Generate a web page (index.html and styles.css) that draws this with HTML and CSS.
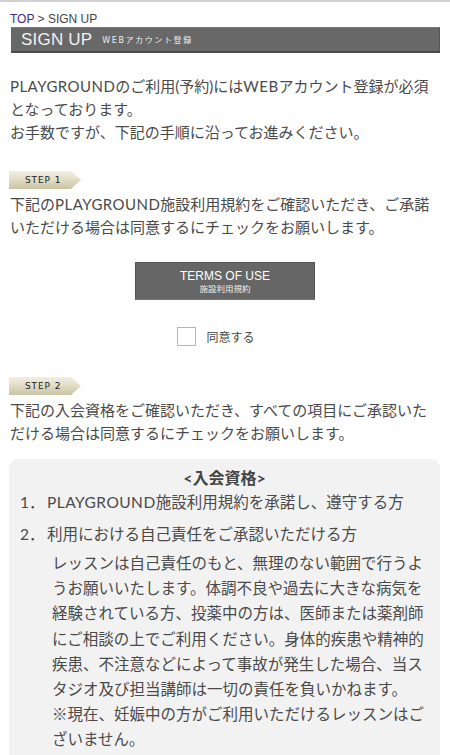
FILE: index.html
```html
<!DOCTYPE html>
<html lang="ja">
<head>
<meta charset="utf-8">
<title>SIGN UP</title>
<link rel="stylesheet" href="styles.css">
</head>
<body>
<div class="page">
  <nav class="crumb"><a href="#" class="crumb-link">TOP</a> &gt; SIGN UP</nav>
  <h1 class="title-bar"><span class="title-main">SIGN UP</span><span class="title-sub">WEBアカウント登録</span></h1>

  <p class="lead"><span class="en">PLAYGROUND</span>のご利用(予約)には<span class="en">WEB</span>アカウント登録が必須となっております。<br>お手数ですが、下記の手順に沿ってお進みください。</p>

  <div class="step"><span class="step-label">STEP 1</span></div>
  <p class="step-text">下記の<span class="en">PLAYGROUND</span>施設利用規約をご確認いただき、ご承諾いただける場合は同意するにチェックをお願いします。</p>

  <div class="btn-row">
    <a href="#" class="terms-btn"><span class="terms-en">TERMS OF USE</span><span class="terms-ja">施設利用規約</span></a>
  </div>
  <label class="agree"><span class="checkbox"></span><span class="agree-text">同意する</span></label>

  <div class="step step-2"><span class="step-label">STEP 2</span></div>
  <p class="step-text">下記の入会資格をご確認いただき、すべての項目にご承認いただける場合は同意するにチェックをお願いします。</p>

  <section class="qual">
    <h2 class="qual-title">&lt;入会資格&gt;</h2>
    <div class="qual-item"><span class="qual-num">1．</span><span class="qual-body"><span class="en">PLAYGROUND</span>施設利用規約を承諾し、遵守する方</span></div>
    <div class="qual-item qual-item-2"><span class="qual-num">2．</span><span class="qual-body">利用における自己責任をご承認いただける方</span></div>
    <p class="qual-note">レッスンは自己責任のもと、無理のない範囲で行うようお願いいたします。体調不良や過去に大きな病気を経験されている方、投薬中の方は、医師または薬剤師にご相談の上でご利用ください。身体的疾患や精神的疾患、不注意などによって事故が発生した場合、当スタジオ及び担当講師は一切の責任を負いかねます。<br>※現在、妊娠中の方がご利用いただけるレッスンはございません。</p>
  </section>
</div>
</body>
</html>
```

FILE: styles.css
```css
html, body {
  margin: 0;
  padding: 0;
  background: #fff;
}
body {
  font-family: "Lato", "Noto Sans CJK JP", sans-serif;
  color: #4a4a4a;
  border-top: 2px solid #d2d2d2;
}
.page {
  padding: 0 10px 0 10px;
}
.en {
  letter-spacing: 0.45px;
}
.crumb {
  font-family: "Liberation Sans", "Noto Sans CJK JP", sans-serif;
  font-size: 12px;
  line-height: 16px;
  padding-top: 9px;
  color: #444;
}
.crumb-link {
  color: #3b2a86;
  text-decoration: none;
}
.title-bar {
  margin: 0 0 0 1px;
  width: 428px;
  height: 23px;
  background: #686868;
  border-top: 1px solid #7a7a7a;
  border-bottom: 2px solid #4a4a4a;
  border-right: 1px solid #555;
  display: flex;
  align-items: center;
  font-weight: normal;
  box-sizing: content-box;
}
.title-main {
  font-family: "Liberation Sans", sans-serif;
  font-size: 17px;
  color: #f2f2f2;
  margin-left: 10px;
  letter-spacing: 0.2px;
}
.title-sub {
  font-family: "DejaVu Sans", "Noto Sans CJK JP", sans-serif;
  font-size: 8px;
  color: #eee;
  margin-left: 10px;
  letter-spacing: 1.6px;
}
.lead {
  margin: 22px 0 0 0;
  font-size: 15px;
  line-height: 23px;
}
.step {
  margin-top: 27px;
  width: 72px;
  height: 18px;
  margin-left: -1px;
  background: linear-gradient(180deg, #f1efe2 0%, #e2dec8 45%, #c9c4a3 100%);
  clip-path: polygon(0 0, 86% 0, 100% 50%, 86% 100%, 0 100%);
  display: flex;
  align-items: center;
}
.step-2 {
  margin-top: 31px;
}
.step-label {
  font-family: "DejaVu Sans", sans-serif;
  font-size: 9px;
  letter-spacing: 0.9px;
  color: #222;
  margin-left: 16px;
}
.step-text {
  margin: 4px 0 0 0;
  font-size: 15px;
  line-height: 23px;
}
.btn-row {
  display: flex;
  justify-content: center;
  margin-top: 23px;
}
.terms-btn {
  width: 178px;
  height: 36px;
  background: #666;
  border: 1px solid #555;
  border-bottom: 1px solid #777;
  display: flex;
  flex-direction: column;
  align-items: center;
  justify-content: center;
  text-decoration: none;
  color: #fff;
}
.terms-en {
  font-family: "Liberation Sans", sans-serif;
  font-size: 12px;
  line-height: 13px;
  margin-top: 1px;
}
.terms-ja {
  font-family: "Noto Sans CJK JP", sans-serif;
  font-size: 8.5px;
  line-height: 11px;
  color: #f0f0f0;
}
.agree {
  display: flex;
  justify-content: center;
  align-items: center;
  margin-top: 27px;
  padding-right: 18px;
}
.checkbox {
  width: 17px;
  height: 17px;
  border: 1px solid #b5b5b5;
  background: #fff;
}
.agree-text {
  font-family: "Noto Sans CJK JP", sans-serif;
  font-size: 12px;
  color: #444;
  margin-left: 10px;
}
.qual {
  margin: 14px 0 0 -1px;
  background: #f2f2f2;
  border-radius: 9px 9px 0 0;
  padding: 7px 0 10px 0;
  min-height: 300px;
}
.qual-title {
  margin: 0;
  text-align: center;
  font-size: 16px;
  line-height: 24px;
  font-weight: bold;
  color: #444;
  font-family: "Lato", "Noto Sans CJK JP", sans-serif;
}
.qual-item {
  display: flex;
  font-size: 15.5px;
  line-height: 24px;
  padding-left: 11px;
}
.qual-item-2 {
  margin-top: 8px;
}
.qual-num {
  width: 27px;
  flex: none;
}
.qual-note {
  margin: 5px 14px 0 43px;
  font-size: 15.5px;
  line-height: 25.2px;
}
```
